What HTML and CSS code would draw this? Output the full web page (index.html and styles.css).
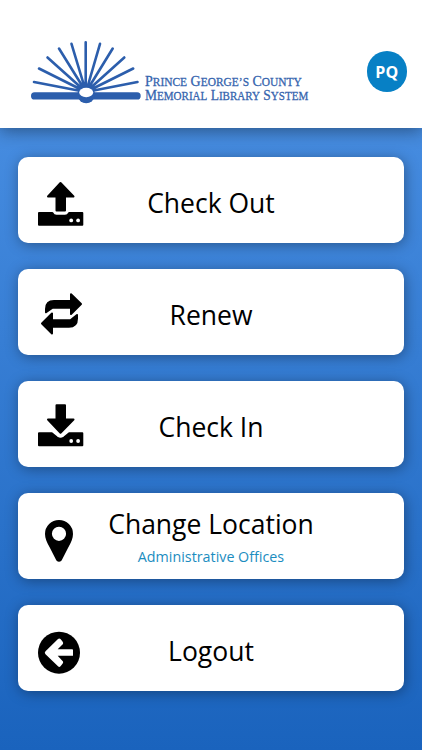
FILE: index.html
```html
<!DOCTYPE html>
<html lang="en">
<head>
  <meta charset="utf-8">
  <title>Library Self Checkout</title>
  <link rel="stylesheet" href="styles.css">
</head>
<body>
<div class="header">
  <svg class="logo" viewBox="24 36 292 72">
    <g class="rays">
      <path d="M86 92L34 82M86 92L39 68.500M86 92L47.500 57.500M86 92L59 48.500M86 92L71.500 43.800M85.700 92V42.200M86 92L100 43.800M86 92L112.700 48.500M86 92L124.300 57.500M86 92L133.200 68.500M86 92L137.500 82"/>
    </g>
    <rect class="ink" x="31" y="92.300" width="109.700" height="7.200" rx="3.600"/>
    <ellipse class="ink" cx="86.200" cy="96.500" rx="8" ry="6.700"/>
    <ellipse class="ink" cx="86.200" cy="92.500" rx="8.500" ry="6"/>
    <ellipse fill="#fff" cx="86.200" cy="92.500" rx="7" ry="4.700"/>
    <text transform="translate(145 86.400) scale(0.902 1)">P<tspan class="sc">RINCE</tspan> G<tspan class="sc">EORGE’S</tspan> C<tspan class="sc">OUNTY</tspan></text>
    <text transform="translate(145 100.300) scale(0.870 1)">M<tspan class="sc">EMORIAL</tspan> L<tspan class="sc">IBRARY</tspan> S<tspan class="sc">YSTEM</tspan></text>
  </svg>
  <div class="avatar">PQ</div>
</div>

<div class="menu">
  <div class="card">
    <svg class="icon" viewBox="36 175 50 50">
      <path class="round" d="M60.500 183L73.500 196.500H65V210.500H56.500V196.500H48Z"/>
      <path class="round" d="M39 213H52.300Q53.500 215.800 56.500 215.800H65Q68 215.800 69.200 213H82.300V224.800H39Z"/>
      <circle cx="71.200" cy="220.400" r="1.900" fill="#fff"/>
      <circle cx="78.100" cy="220.400" r="1.900" fill="#fff"/>
    </svg>
    <div class="title">Check Out</div>
  </div>

  <div class="card">
    <svg class="icon" viewBox="36 287 50 50">
      <path class="round" d="M71 294.300L81 304L71 314V307.700H52.500L46 312.300V309Q46 301 54 301H71Z"/>
      <path class="round" d="M52 333.500L42 323.500L52 313.500V320.300H70.500L77 315V318.500Q77 326.800 69 326.800H52Z"/>
    </svg>
    <div class="title">Renew</div>
  </div>

  <div class="card">
    <svg class="icon" viewBox="36 399 50 50">
      <path class="round" d="M56.500 405.300H65V419.500H73.500L60.500 432.800L48 419.500H56.500Z"/>
      <path class="round" d="M39 433.300H51.800L57 437.500Q60.500 439.800 64 437.500L69.200 433.300H82.300V445.300H39Z"/>
      <circle cx="71.200" cy="441" r="1.900" fill="#fff"/>
      <circle cx="78.100" cy="441" r="1.900" fill="#fff"/>
    </svg>
    <div class="title">Check In</div>
  </div>

  <div class="card">
    <svg class="icon" viewBox="36 511 50 50">
      <path fill-rule="evenodd" d="M59 520A14 14 0 0 1 73 534C73 538.500 71 542.500 68.500 547L61.600 560.400Q59 563.300 56.400 560.400L49.500 547C47 542.500 45 538.500 45 534A14 14 0 0 1 59 520ZM59 526.700A7.100 7.100 0 1 0 59 540.900A7.100 7.100 0 1 0 59 526.700Z"/>
    </svg>
    <div class="title location">Change Location
      <div class="place">Administrative Offices</div>
    </div>
  </div>

  <div class="card">
    <svg class="icon" viewBox="36 623 50 50">
      <circle cx="59" cy="652.700" r="21"/>
      <path class="arrow" d="M73 649.700V655.700H57.700L63 661.500Q63.500 662.800 62.500 663.700L60.500 666.300Q59.300 667.500 58 666.300L45.500 654.200Q44 652.700 45.500 651.200L58 639.100Q59.300 637.900 60.500 639.100L62.500 641.400Q63.500 642.600 63 643.900L57.700 649.200H72Q73 649.200 73 649.700Z"/>
    </svg>
    <div class="title">Logout</div>
  </div>
</div>
</body>
</html>
```

FILE: styles.css
```css
* { box-sizing:border-box; }
body { margin:0; height:750px; overflow:hidden; color:#000;
  font-family:"Open Sans", "Noto Sans", sans-serif;
  background:linear-gradient(#468ce0 127px, #1a63bd 750px); }

/* header */
.header { display:flex; justify-content:space-between; height:127.5px;
  padding:36px 15px 0 24px; background:#fff;
  box-shadow:0 3px 16px rgba(0,0,0,0.4); }
.logo { width:292px; height:72px; }
.rays { fill:none; stroke:#2c5eac; stroke-width:2.6; stroke-linecap:round; }
.ink { fill:#2c5eac; }
.logo text { font-family:"Liberation Serif", serif; font-size:15.5px;
  fill:#3564ae; stroke:#3564ae; stroke-width:0.3; }
.logo .sc { font-size:12.7px; }
.avatar { width:40.5px; height:40.5px; margin-top:15px; border-radius:50%;
  background:#0780c5; color:#fff; font-size:16px; font-weight:bold;
  line-height:42px; text-align:center; }

/* menu buttons */
.menu { display:flex; flex-direction:column; gap:26.5px;
  padding:29.5px 18px 0 17.5px; }
.card { display:grid; grid-template-columns:50px 1fr 50px;
  align-items:center; height:85.5px; padding:0 18px 0 18.5px;
  background:#fff; border-radius:10px;
  box-shadow:1px 2px 14px rgba(0,0,0,0.35); }
.icon { width:50px; height:50px; fill:#000; overflow:visible; }
.round { stroke:#000; stroke-width:2; stroke-linejoin:round; }
.arrow { fill:#fff; }
.title { font-size:26.5px; line-height:36px; text-align:center;
  white-space:nowrap; padding-top:6.5px; }
.location { padding-top:5px; }
.place { font-size:14.3px; line-height:29px; color:#1b8dbf; }
```
